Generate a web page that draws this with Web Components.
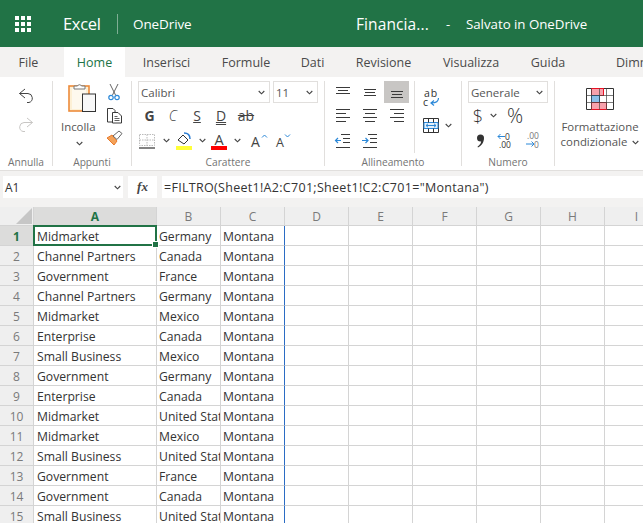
<!DOCTYPE html>
<html lang="it"><head><meta charset="utf-8"><title>Excel</title>
<style>
html,body{margin:0;padding:0;background:#fff}
body{width:643px;height:523px;overflow:hidden;font-family:"Open Sans","Noto Sans",sans-serif;display:flex;flex-direction:column}
</style></head><body>
<x-appbar></x-appbar>
<x-tabs></x-tabs>
<x-ribbon></x-ribbon>
<x-formula></x-formula>
<x-sheet></x-sheet>
<script>
const FONT='"Open Sans","Noto Sans",sans-serif';
const chev=(c='#444')=>`<svg width="7" height="5" viewBox="0 0 7 5"><path d="M.7 1 3.5 3.8 6.3 1" fill="none" stroke="${c}" stroke-width="1.1"/></svg>`;
const lines=(rows,w=14)=>{let s=`<svg width="${w}" height="16" viewBox="0 0 ${w} 16">`;for(const [y,a,b] of rows)s+=`<path d="M${a} ${y+.5}H${b}" stroke="#3a3a3a"/>`;return s+'</svg>'};
class Base extends HTMLElement{
  constructor(){super();this.attachShadow({mode:'open'}).innerHTML=`<style>${this.css()}</style>${this.html()}`}
  css(){return ''} html(){return '<slot></slot>'}
}
customElements.define('x-appbar',class extends Base{
  css(){return `:host{display:flex;align-items:center;height:47px;flex:none;background:#217346;color:#fff;font-family:${FONT}}
  svg{margin-left:15px;flex:none}
  .app{margin-left:32px;font-size:16.5px;width:54px;letter-spacing:-.3px}
  .div{width:1px;height:20px;background:#7fae94;margin-right:15px}
  .od{font-size:13.5px;width:223px;letter-spacing:-.1px}
  .fn{font-size:15.5px;width:90px;letter-spacing:.1px}
  .dash{font-size:13px;width:20px}
  .sv{font-size:13.3px;letter-spacing:-.03px;white-space:nowrap}`}
  html(){let r='';for(let y=0;y<3;y++)for(let x=0;x<3;x++)r+=`<rect x="${x*6}" y="${y*6}" width="4" height="4"/>`;
  return `<svg width="16" height="16" viewBox="0 0 16 16" fill="#fff">${r}</svg><span class="app">Excel</span><span class="div"></span><span class="od">OneDrive</span><span class="fn">Financia...</span><span class="dash">-</span><span class="sv">Salvato in OneDrive</span>`}
});
customElements.define('x-tabs',class extends Base{
  css(){return `:host{display:flex;height:30px;flex:none;background:#f3f2f1;font-family:${FONT};font-size:12.5px;color:#4a4a4a;overflow:hidden;white-space:nowrap}
  span{display:flex;align-items:center;justify-content:center;flex:none}
  .on{background:#fff;color:#217346}
  .last{justify-content:flex-start;padding-left:36px}`}
  html(){const t=[['File',57],['',7],['Home',61,'on'],['Inserisci',83],['Formule',76],['Dati',57],['Revisione',85],['Visualizza',90],['Guida',64],['Dimmi',60,'last']];
  return t.map(([n,w,c])=>`<span class="${c||''}" style="width:${w}px">${n}</span>`).join('')}
});
customElements.define('x-combo',class extends Base{
  css(){return `:host{display:flex;align-items:center;justify-content:space-between;box-sizing:border-box;height:22px;border:1.5px solid #e1dfdd;padding:0 4px 0 2px;font-family:${FONT};font-size:11.5px;color:#555;background:#fff}`}
  html(){return `<span><slot></slot></span>${chev()}`}
});
customElements.define('x-group',class extends Base{
  css(){return `:host{display:flex;flex-direction:column;flex:none;height:89px;box-sizing:border-box}
  .b{flex:1;display:flex;min-height:0}
  .l{height:15px;line-height:15px;text-align:center;font-size:10.2px;color:#737373;white-space:nowrap}`}
  html(){return `<div class="b"><slot></slot></div><div class="l">${this.getAttribute('label')||''}</div>`}
});
customElements.define('x-ribbon',class extends Base{
  css(){return `:host{display:flex;height:89px;padding-top:4px;flex:none;background:#fff;font-family:${FONT};color:#444;overflow:hidden}
  svg{overflow:visible}
  .sep{width:1px;height:85px;background:#e1dfdd;flex:none}
  .c{display:flex;align-items:center;justify-content:center}
  .col{display:flex;flex-direction:column;align-items:center}
  .undo{width:52px;gap:6px;padding-top:7px;box-sizing:border-box}
  .paste{width:36px;align-items:flex-start}
  .paste .t{font-size:11.4px;color:#555;margin-top:7px;line-height:16px}
  .paste .ch{margin-top:6px;height:7px;display:flex;margin-left:15px}
  .cb{display:flex;flex-direction:column;align-items:center;gap:6px;width:24px;margin-left:5px}
  .font{display:grid;grid-template-rows:22px 25px 25px;padding-left:6px;width:186px}
  .f1{display:flex;gap:3px}
  .f2{display:grid;grid-template-columns:23px 24px 24px 24px 26px}
  .f2 span{display:flex;align-items:center;justify-content:center;font-size:14px;color:#444;font-family:${FONT}}
  .f3{display:flex;align-items:center;padding-left:1px}
  .al{display:grid;grid-template-columns:27px 27px 27px;grid-template-rows:22px 25px 25px;padding-left:4px;width:85px;flex:none}
  .al>div{display:flex;align-items:center;justify-content:center}
  .hi{background:#c8c6c4;width:25px;margin-left:1px}
  .num{display:grid;grid-template-rows:22px 25px 25px;padding-left:6px;width:86px}
  .n2,.n3{display:flex;align-items:center}
  .cf{display:flex;flex-direction:column;align-items:center;width:88px;padding-top:7px;box-sizing:border-box;padding-left:2px}
  .cf .t{font-size:11.4px;line-height:15px;color:#555;white-space:nowrap;text-align:center;margin-top:9px}
  .cf .t svg{margin-left:5px;vertical-align:1px}
  text{font-family:${FONT}}`}
  html(){return `
<x-group label="Annulla" style="width:52px"><div class="col undo">
<svg width="16" height="17" viewBox="0 0 16 17" fill="none" stroke="#444"><path d="M7 1 1.500 5.500 7 10M1.500 5.500H10a4.600 4.600 0 0 1 1 9H9"/></svg>
<svg width="16" height="17" viewBox="0 0 16 17" fill="none" stroke="#c8c6c4" style="margin-top:6px"><path d="M9 1 14.500 5.500 9 10M14.500 5.500H6a4.600 4.600 0 0 0-1 9H7"/></svg>
</div></x-group><i class="sep"></i>
<x-group label="Appunti" style="width:78px"><div style="display:flex;padding-left:8px">
<div class="col paste">
<svg width="29" height="31" viewBox="0 0 29 31" style="margin-left:7px"><rect x="1" y="5" width="20" height="25" fill="#fdf0d5" stroke="#ed8b3a" stroke-width="1.600"/><rect x="4" y="7" width="14" height="21" fill="#fff" opacity=".6"/><path d="M6 8V5h3.500a2.200 2.200 0 0 1 4 0H17v3z" fill="#fff" stroke="#777"/><rect x="14.500" y="13" width="13" height="17.500" fill="#f8f8f8" stroke="#333"/></svg>
<div class="t">Incolla</div><div class="ch">${chev()}</div></div>
<div class="cb" style="padding-top:3px">
<svg width="12" height="17" viewBox="0 0 12 17" fill="none"><path d="M2 0 7.500 11M10 0 4.500 11" stroke="#666"/><circle cx="3" cy="13.500" r="2.200" stroke="#2b88d8" stroke-width="1.200"/><circle cx="9" cy="13.500" r="2.200" stroke="#2b88d8" stroke-width="1.200"/></svg>
<svg width="17" height="17" viewBox="0 0 17 17" fill="#fff" stroke="#3a3a3a"><path d="M8.500 15H1.500V1.500H7L9 3.500V5"/><path d="M6.500 5.500H12L15.500 9V16H6.500z"/><path d="M8.500 9.500h3M8.500 11.500h5M8.500 13.500h5" fill="none" stroke-width=".8"/></svg>
<svg width="17" height="16" viewBox="0 0 17 16"><path d="M1 8 6 5 11 11 8 15 4 11 1 8z" fill="#f4a259" stroke="#e8792b"/><path d="M7 6 13 1l3 2.500-5 6z" fill="#fff" stroke="#666"/></svg>
</div></div></x-group><i class="sep"></i>
<x-group label="Carattere" style="width:192px"><div class="font">
<div class="f1"><x-combo style="width:132px">Calibri</x-combo><x-combo style="width:45px">11</x-combo></div>
<div class="f2"><span style="font-weight:700">G</span><span style="font-style:italic;font-weight:300">C</span><span style="text-decoration:underline">S</span><span style="text-decoration:underline double">D</span><span style="text-decoration:line-through">ab</span></div>
<div class="f3">
<svg width="17" height="16" viewBox="0 0 17 16" fill="none"><path d="M.5 1.500h15v11H.5zM8 1.500v11M.5 7h15" stroke="#bbb" stroke-dasharray="1.500 1"/><path d="M0 15H16" stroke="#333" stroke-width="1.200"/></svg>
<span class="c" style="width:16px;margin-left:2px">${chev()}</span>
<svg width="17" height="18" viewBox="0 0 17 18" style="margin-left:2px"><path d="M2 8 7 3l5 5-4 4z" fill="#fff" stroke="#333"/><path d="M8 1c4 0 6 2 6 6" fill="none" stroke="#2b7cd3" stroke-width="1.500"/><rect y="14" width="16" height="4" fill="#ffff38"/></svg>
<span class="c" style="width:18px">${chev()}</span>
<svg width="17" height="18" viewBox="0 0 17 18"><text x="8" y="12.500" font-size="14.500" text-anchor="middle" fill="#444">A</text><rect y="14" width="16" height="4" fill="#f00"/></svg>
<span class="c" style="width:19px">${chev()}</span>
<svg width="20" height="16" viewBox="0 0 20 16" style="margin-left:4px"><text x="0" y="14" font-size="14" fill="#444">A</text><path d="M11 4.500 13.500 2 16 4.500" fill="none" stroke="#2b88d8"/></svg>
<svg width="20" height="16" viewBox="0 0 20 16" style="margin-left:5px"><text x="0" y="14" font-size="12.500" fill="#444">A</text><path d="M9 1.500 11.500 4 14 1.500" fill="none" stroke="#2b88d8"/></svg>
</div></div></x-group><i class="sep"></i>
<x-group label="Allineamento" style="width:136px"><div style="display:flex"><div class="al">
<div>${lines([[3,0,14],[6,2,12],[9,0,14]])}</div><div>${lines([[5,1,13],[8,2,12],[11,1,13]])}</div><div class="hi">${lines([[7,1,13],[10,2,12],[13,1,13]])}</div>
<div>${lines([[1,0,14],[5,0,10],[9,0,14],[13,0,10]])}</div><div>${lines([[1,0,14],[5,2,12],[9,0,14],[13,2,12]])}</div><div>${lines([[1,0,14],[5,4,14],[9,0,14],[13,4,14]])}</div>
<div><svg width="15" height="14" viewBox="0 0 15 14" fill="none"><path d="M6 .5h9M8 4.500h7M8 8.500h7M1 13.500h14" stroke="#3a3a3a"/><path d="M.5 6.500H6M3 4 .5 6.500 3 9" stroke="#2b88d8" stroke-width="1.200"/></svg></div>
<div><svg width="15" height="14" viewBox="0 0 15 14" fill="none"><path d="M6 .5h9M8 4.500h7M8 8.500h7M1 13.500h14" stroke="#3a3a3a"/><path d="M0 6.500H6M3.500 4 6 6.500 3.500 9" stroke="#2b88d8" stroke-width="1.200"/></svg></div>
<div></div></div>
<i class="sep" style="height:72px"></i>
<div class="col" style="width:49px;align-items:flex-start;padding-left:8px;box-sizing:border-box">
<svg width="18" height="20" viewBox="0 0 18 20" style="margin-top:7px"><text x="1" y="9" font-size="10.500" fill="#333" letter-spacing=".8">ab</text><text x="0" y="18" font-size="10.500" fill="#333">c</text><path d="M15.500 10c0 3-2 5-7 5M11 12.500 8 15l3 2.500" fill="none" stroke="#2b88d8" stroke-width="1.200"/></svg>
<div style="display:flex;align-items:center;margin-top:10px;gap:6px"><svg width="16" height="15" viewBox="0 0 16 15" fill="none"><path d="M.5.5h15v14H.5z" stroke="#333"/><path d="M1 4.500h14v6H1z" fill="#e3f0fb" stroke="#2b88d8"/><path d="M5.500 .5v4M10.500.5v4M5.500 10.500v4M10.500 10.500v4" stroke="#333"/><path d="M3 7.500h10M5 5.800 3 7.500l2 1.700M11 5.800l2 1.700-2 1.700" stroke="#2b88d8"/></svg>${chev()}</div>
</div></div></x-group><i class="sep"></i>
<x-group label="Numero" style="width:92px"><div class="num">
<x-combo style="width:80px">Generale</x-combo>
<div class="n2"><span style="font-size:18px;font-weight:300;color:#333;width:20px;text-align:center">$</span><span class="c" style="width:10px">${chev()}</span><span style="font-size:20px;font-weight:300;margin-left:9px;color:#333">%</span></div>
<div class="n3"><svg width="9" height="14" viewBox="0 0 9 14" style="margin-left:8px"><circle cx="4.500" cy="4" r="3.500" fill="#333"/><path d="M6 2.500C9 5 8 10.500 2 13.500l-.5-.8C4.500 10.500 5.500 8.500 5 6z" fill="#333"/></svg>
<svg width="17" height="17" viewBox="0 0 17 17" style="margin-left:12px"><text x="8" y="8" font-size="8.500" fill="#333">0</text><text x="2" y="16" font-size="8.500" fill="#333">.00</text><path d="M8 4.500H1M3.500 2 1 4.500 3.500 7" fill="none" stroke="#2b88d8"/></svg>
<svg width="17" height="17" viewBox="0 0 17 17" style="margin-left:11px"><text x="2" y="7" font-size="8.500" fill="#777">.00</text><text x="9" y="16" font-size="8.500" fill="#777">0</text><path d="M1 12H9M6.500 9.500 9 12l-2.500 2.500" fill="none" stroke="#2b88d8"/></svg>
</div></div></x-group><i class="sep"></i>
<x-group label="" style="width:88px"><div class="cf">
<svg width="28" height="22" viewBox="0 0 28 22"><path d="M.5.5h27v21H.5z" fill="#fff" stroke="#333"/><rect x="5.500" y=".5" width="12" height="7" fill="#f7a1ac" stroke="#e81123"/><rect x="5.500" y="7.500" width="8" height="7" fill="#8cc0ea" stroke="#106ebe"/><rect x="5.500" y="14.500" width="15" height="7" fill="#f7a1ac" stroke="#e81123"/><path d="M5.500.5v21M13.500.5v21M20.500.5v21M.5 7.500h27M.5 14.500h27" fill="none" stroke="#444" stroke-width=".7"/></svg>
<div class="t">Formattazione<br>condizionale${chev()}</div>
</div></x-group>`}
});
customElements.define('x-formula',class extends Base{
  css(){return `:host{display:flex;height:37px;box-sizing:border-box;border-top:1px solid #e1dfdd;padding:5px 0 9px 3px;flex:none;gap:5px;background:#f3f2f1;font-family:${FONT};font-size:12px;color:#333}
  div{background:#fff;display:flex;align-items:center;height:22px;flex:none}
  .n{width:120px;justify-content:space-between;padding:0 2px;box-sizing:border-box;font-size:12px}
  .fx{width:29px;justify-content:center;font:italic 700 13px "Liberation Serif",serif;color:#444}
  .f{flex:1;padding-left:2px;font-size:12.5px;letter-spacing:.3px;white-space:nowrap;overflow:hidden}`}
  html(){return `<div class="n"><span>A1</span>${chev()}</div><div class="fx">fx</div><div class="f">=FILTRO(Sheet1!A2:C701;Sheet1!C2:C701="Montana")</div>`}
});
customElements.define('x-sheet',class extends Base{
  css(){return `:host{display:block;flex:1;min-height:0;overflow:hidden;background:#fff;font-family:${FONT}}
  .g{display:grid;grid-template-columns:34px 123px 64px 64px repeat(6,64px);grid-auto-rows:20px;grid-template-rows:19px;width:643px}
  .h,.r{background:#efefef;color:#7a7a7a;font-size:12px;display:flex;align-items:center;justify-content:center;box-sizing:border-box;border-right:1px solid #d4d4d4;border-bottom:1px solid #d4d4d4}
  .r{padding-top:1px}
  .corner{position:relative;background:#efefef;border-right:1px solid #d4d4d4;border-bottom:1px solid #d4d4d4;box-sizing:border-box}
  .corner svg{position:absolute;right:1px;bottom:1px}
  .on{background:#dcdcdb;color:#217346;font-weight:700}
  .c{box-sizing:border-box;border-right:1px solid #d4d4d4;border-bottom:1px solid #d4d4d4;font-size:12.2px;line-height:21px;color:#333;padding-left:2px;white-space:nowrap;overflow:hidden;position:relative}
  .a{padding-left:3px}
  .spill{border-right-color:#2b6cc4}
  .sel{overflow:visible;z-index:1}
  .box{position:absolute;left:-1px;top:-1px;right:-1px;bottom:-1px;border:2px solid #217346;pointer-events:none}
  .dot{position:absolute;right:-4px;bottom:-4px;width:5px;height:5px;background:#217346;border:1px solid #fff}`}
  html(){const d=[['Midmarket','Germany'],['Channel Partners','Canada'],['Government','France'],['Channel Partners','Germany'],['Midmarket','Mexico'],['Enterprise','Canada'],['Small Business','Mexico'],['Government','Germany'],['Enterprise','Canada'],['Midmarket','United States'],['Midmarket','Mexico'],['Small Business','United States'],['Government','France'],['Government','Canada'],['Small Business','United States']];
  let s=`<div class="g"><div class="corner"><svg width="16" height="16" viewBox="0 0 16 16"><path d="M16 0V16H0z" fill="#c6c6c6"/></svg></div>`;
  'ABCDEFGHI'.split('').forEach((l,i)=>s+=`<div class="h ${i==0?'on':''}">${l}</div>`);
  d.forEach((r,i)=>{s+=`<div class="r ${i==0?'on':''}">${i+1}</div>`;
   s+=`<div class="c a ${i==0?'sel':''}">${r[0]}${i==0?'<span class="box"><span class="dot"></span></span>':''}</div><div class="c">${r[1]}</div><div class="c spill">Montana</div>`;
   for(let k=0;k<6;k++)s+=`<div class="c"></div>`;});
  return s+'</div>'}
});
</script>
</body></html>
